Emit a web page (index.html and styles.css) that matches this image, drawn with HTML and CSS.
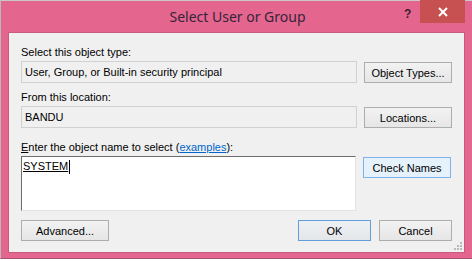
FILE: index.html
```html
<!DOCTYPE html>
<html lang="en">

<head>
    <meta charset="UTF-8" />
    <title>Select User or Group</title>
    <link rel="stylesheet" href="styles.css">
</head>

<body>
    <div class="window">
        <div class="title-bar">
            <span class="title">Select User or Group</span>
            <span class="help">?</span>
            <button class="close" aria-label="Close">
                <svg width="10" height="10" viewBox="0 0 10 10">
                    <path d="M1 1 L9 9 M9 1 L1 9" stroke="#fff" stroke-width="2" />
                </svg>
            </button>
        </div>
        <div class="client">
            <div class="label">Select this object type:</div>
            <div class="row">
                <div class="field">User, Group, or Built-in security principal</div>
                <button class="btn">Object Types...</button>
            </div>

            <div class="label gap-small">From this location:</div>
            <div class="row">
                <div class="field">BANDU</div>
                <button class="btn">Locations...</button>
            </div>

            <div class="label gap-large"><u>E</u>nter the object name to select (<a href="#" class="link">examples</a>):</div>
            <div class="row">
                <div class="names"><span class="name">SYSTEM</span><span class="caret"></span></div>
                <button class="btn btn-hover">Check Names</button>
            </div>

            <div class="actions">
                <button class="btn">Advanced...</button>
                <div class="actions-right">
                    <button class="btn btn-small btn-default">OK</button>
                    <button class="btn btn-small">Cancel</button>
                </div>
            </div>

            <svg class="grip" width="8" height="8" viewBox="0 0 8 8">
                <rect x="6" y="0" width="2" height="2" fill="#b9b9b9" />
                <rect x="3" y="3" width="2" height="2" fill="#b9b9b9" />
                <rect x="6" y="3" width="2" height="2" fill="#b9b9b9" />
                <rect x="0" y="6" width="2" height="2" fill="#b9b9b9" />
                <rect x="3" y="6" width="2" height="2" fill="#b9b9b9" />
                <rect x="6" y="6" width="2" height="2" fill="#b9b9b9" />
            </svg>
        </div>
    </div>
</body>

</html>
```

FILE: styles.css
```css
body {
    margin: 0;
    background: #fff;
    font-family: 'Liberation Sans', Arial, sans-serif;
    font-size: 11px;
    color: #000;
}

.window {
    width: 471px;
    height: 257px;
    background: #e4668f;
    border-top: 1px solid #c9c9c9;
    border-left: 1px solid #b9b9b9;
    border-bottom: 1px solid #a8506c;
    display: flex;
    flex-direction: column;
}

.title-bar {
    height: 31px;
    position: relative;
    display: flex;
    justify-content: center;
}

.title {
    font-family: 'Noto Sans', 'Open Sans', sans-serif;
    font-size: 14px;
    color: #35243a;
    line-height: 16px;
    margin-top: 8px;
    margin-left: 2px;
}

.help {
    position: absolute;
    left: 403px;
    top: 6px;
    font-family: 'Liberation Sans', sans-serif;
    font-weight: bold;
    font-size: 12px;
    color: #3a1f2e;
}

.close {
    position: absolute;
    left: 419px;
    top: -1px;
    width: 45px;
    height: 23px;
    background: #c75050;
    border: none;
    padding: 0;
    display: flex;
    align-items: center;
    justify-content: center;
}

.client {
    position: relative;
    margin: 0 7px 0 7px;
    height: 221px;
    background: #f0f0f0;
    border: 1px solid #c85a7f;
    padding: 11px 12px 0 12px;
    box-sizing: border-box;
}

.label {
    height: 17px;
    line-height: 17px;
}

.gap-small {
    margin-top: 6px;
}

.gap-large {
    margin-top: 11px;
}

.row {
    display: flex;
    gap: 7px;
    align-items: flex-start;
}

.field {
    width: 336px;
    height: 22px;
    box-sizing: border-box;
    border: 1px solid #d1d1d1;
    padding: 0 3px;
    line-height: 20px;
}

.btn {
    font-family: 'Liberation Sans', Arial, sans-serif;
    font-size: 11px;
    color: #000;
    width: 88px;
    height: 21px;
    margin-top: 1px;
    padding: 0;
    background: linear-gradient(#f2f2f2, #e6e6e6);
    border: 1px solid #adadad;
}

.btn-hover {
    background: #e5f1fb;
    border-color: #7eb4ea;
}

.btn-small {
    width: 73px;
}

.btn-default {
    border-color: #5fa0dc;
    background: linear-gradient(#eef1f4, #e4e6e9);
}

.names {
    width: 335px;
    height: 55px;
    box-sizing: border-box;
    background: #fff;
    border: 1px solid #e3e3e3;
    border-top-color: #6d6d6d;
    border-left-color: #6d6d6d;
    padding: 3px 1px;
    display: flex;
    align-items: flex-start;
}

.name {
    text-decoration: underline;
    line-height: 13px;
}

.caret {
    width: 1px;
    height: 14px;
    background: #000;
    margin-left: 1px;
}

.link {
    color: #0066cc;
}

.actions {
    display: flex;
    justify-content: space-between;
    margin-top: 9px;
    width: 431px;
}

.actions-right {
    display: flex;
    gap: 8px;
}

.actions .btn {
    margin-top: 0;
}

.grip {
    position: absolute;
    right: 2px;
    bottom: 2px;
}
```
